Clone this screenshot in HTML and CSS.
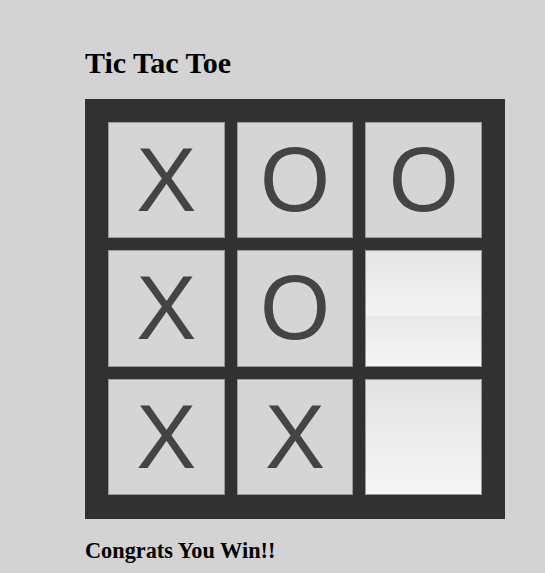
FILE: index.html
```html
<!DOCTYPE html>
<html>
<head>
<meta charset="utf-8">
<link rel="stylesheet" href="styles.css">
</head>
<body>
<main class="game">
  <h1 class="title">Tic Tac Toe</h1>
  <div class="board">
    <div class="cell">X</div>
    <div class="cell">O</div>
    <div class="cell">O</div>
    <div class="cell">X</div>
    <div class="cell">O</div>
    <div class="cell empty glossy"></div>
    <div class="cell">X</div>
    <div class="cell">X</div>
    <div class="cell empty"></div>
  </div>
  <h2 class="status">Congrats You Win!!</h2>
</main>
</body>
</html>
```
FILE: styles.css
```css
html, body {
  margin: 0;
  padding: 0;
  background: #d3d3d3;
}
body {
  font-family: "Liberation Serif", "Times New Roman", serif;
  color: #000;
}
.game {
  display: flex;
  flex-direction: column;
  align-items: flex-start;
  padding: 45.5px 0 0 85px;
}
.title {
  margin: 0;
  font-size: 30px;
  line-height: 34px;
  font-weight: bold;
}
.board {
  margin-top: 19px;
  box-sizing: border-box;
  width: 420px;
  height: 420px;
  padding: 23px;
  background: #313131;
  display: grid;
  grid-template-columns: repeat(3, 1fr);
  grid-template-rows: repeat(3, 1fr);
  gap: 12px;
}
.cell {
  box-sizing: border-box;
  border: 1px solid #9a9a9a;
  background: #d5d5d5;
  display: flex;
  align-items: center;
  justify-content: center;
  font-family: "Liberation Sans", Arial, sans-serif;
  font-size: 90px;
  line-height: 1;
  color: #444;
}
.cell.empty {
  background: linear-gradient(#e3e3e3, #f5f5f5);
}
.cell.glossy {
  background: linear-gradient(#e5e5e5 0%, #f3f3f3 56%, #e8e8e8 56.5%, #f6f6f6 100%);
}
.status {
  margin: 19px 0 0;
  font-size: 22.3px;
  line-height: 26px;
  font-weight: bold;
}
```
